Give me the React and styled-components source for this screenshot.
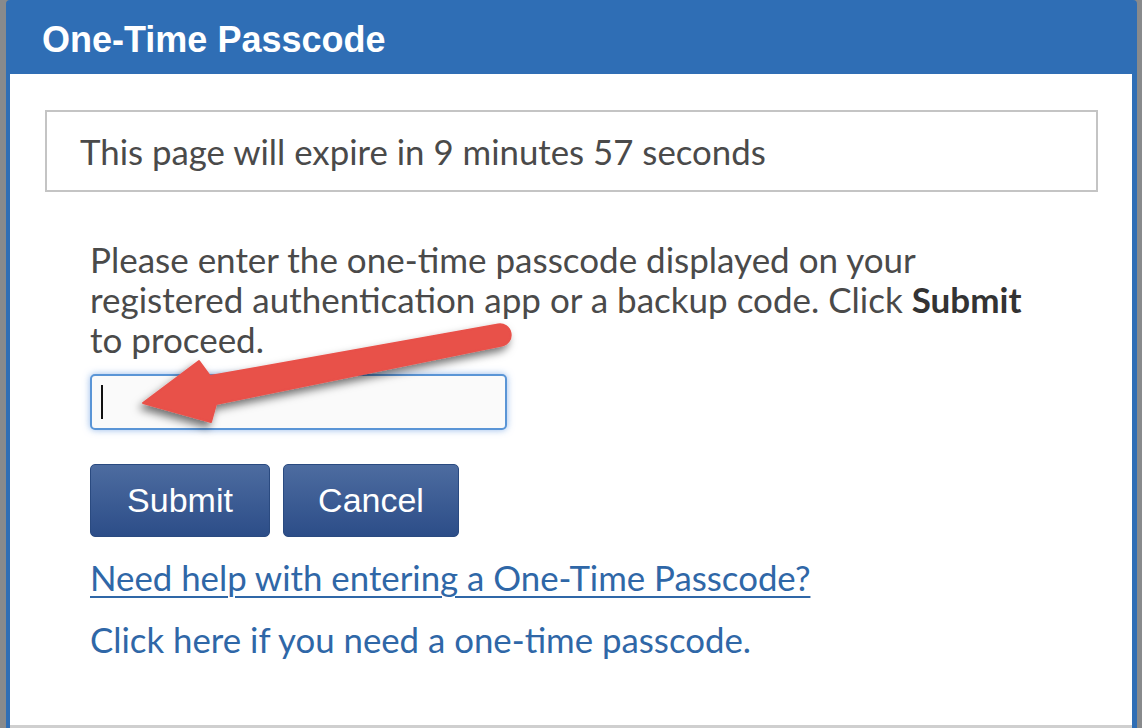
import React from "react";
import styled, { createGlobalStyle } from "styled-components";

const Global = createGlobalStyle`
  html, body { margin: 0; padding: 0; background: #ffffff; }
  body { font-family: Lato, "Noto Sans", sans-serif; }
  * { box-sizing: border-box; }
`;

const Frame = styled.div`
  position: relative;
  width: 1142px;
  height: 728px;
  background: #888a8c;
  padding: 0 5px 0 6px;
  display: flex;
`;

const Dialog = styled.section`
  flex: 1;
  display: flex;
  flex-direction: column;
  background: #2f6eb5;
  border-radius: 4px 4px 0 0;
  padding: 0 5px 0 4px;
`;

const Header = styled.h1`
  margin: 0;
  height: 74px;
  display: flex;
  align-items: center;
  padding: 6px 0 0 32px;
  color: #ffffff;
  font-family: "Liberation Sans", Arial, sans-serif;
  font-weight: 700;
  font-size: 36px;
`;

const Body = styled.div`
  flex: 1;
  background: #ffffff;
  border-bottom: 3px solid #cfcfcf;
  padding: 36px 34px 0 35px;
  display: flex;
  flex-direction: column;
`;

const Notice = styled.div`
  height: 82px;
  border: 2px solid #c4c4c4;
  display: flex;
  align-items: center;
  padding-left: 33px;
  color: #4a4a4a;
  font-size: 34.8px;
`;

const Content = styled.div`
  padding: 47px 0 0 45px;
  display: flex;
  flex-direction: column;
  align-items: flex-start;
`;

const Para = styled.p`
  margin: 0;
  width: 950px;
  color: #4a4a4a;
  font-size: 35px;
  line-height: 40px;
  b { color: #333; font-weight: 700; }
`;

const Field = styled.div`
  margin-top: 15px;
  width: 417px;
  height: 56px;
  border: 2px solid #5a95d6;
  border-radius: 5px;
  background: #fafafa;
  box-shadow: 0 0 7px rgba(80, 140, 220, 0.6);
  display: flex;
  align-items: center;
  padding-left: 9px;
`;

const Caret = styled.span`
  width: 2px;
  height: 34px;
  background: #111;
`;

const Buttons = styled.div`
  margin-top: 34px;
  display: flex;
  gap: 13px;
`;

const Button = styled.button`
  width: ${(p) => p.$w}px;
  height: 73px;
  border: 1px solid #2a4a80;
  border-radius: 5px;
  background: linear-gradient(#4d6ca0, #2c4d88);
  color: #ffffff;
  font-family: "Liberation Sans", Arial, sans-serif;
  font-size: 34px;
  padding: 0;
`;

const Link = styled.a`
  margin-top: ${(p) => p.$mt}px;
  color: #2f67a7;
  font-size: 34.8px;
  line-height: 40px;
  text-decoration: ${(p) => (p.$u ? "underline" : "none")};
  text-underline-offset: 5px;
  text-decoration-thickness: 2px;
`;

const Overlay = styled.svg`
  position: absolute;
  left: 0;
  top: 0;
  pointer-events: none;
`;

export default function App() {
  return (
    <>
      <Global />
      <Frame>
        <Dialog>
          <Header>One-Time Passcode</Header>
          <Body>
            <Notice>This page will expire in 9 minutes 57 seconds</Notice>
            <Content>
              <Para>
                Please enter the one-time passcode displayed on your registered
                authentication app or a backup code. Click <b>Submit</b> to
                proceed.
              </Para>
              <Field>
                <Caret />
              </Field>
              <Buttons>
                <Button $w={180}>Submit</Button>
                <Button $w={176}>Cancel</Button>
              </Buttons>
              <Link $u $mt={21}>Need help with entering a One-Time Passcode?</Link>
              <Link $mt={22}>Click here if you need a one-time passcode.</Link>
            </Content>
          </Body>
        </Dialog>
        <Overlay width="1142" height="728" viewBox="0 0 1142 728">
          <defs>
            <filter id="sh" x="-20%" y="-40%" width="140%" height="180%">
              <feDropShadow dx="-3" dy="5" stdDeviation="4" floodColor="#000" floodOpacity="0.55" />
            </filter>
          </defs>
          <path
            d="M143 403 L199 361 L210 376 L498 324.5 A10.5 10.5 0 0 1 502 345.5 L216 404 L211 422 Z"
            fill="#e8514a"
            stroke="#e8514a"
            strokeWidth="2"
            strokeLinejoin="round"
            filter="url(#sh)"
          />
        </Overlay>
      </Frame>
    </>
  );
}
